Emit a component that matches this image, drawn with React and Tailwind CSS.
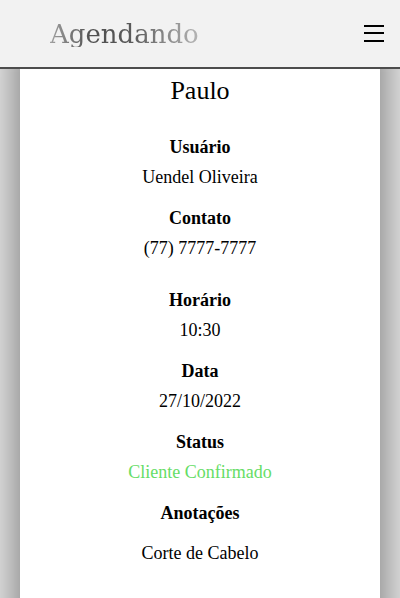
import React from 'react';

const fields = [
  { label: 'Usuário', value: 'Uendel Oliveira', gap: 'mt-[24px]' },
  { label: 'Contato', value: '(77) 7777-7777', gap: 'mt-[11px]' },
  { label: 'Horário', value: '10:30', gap: 'mt-[22px]' },
  { label: 'Data', value: '27/10/2022', gap: 'mt-[11px]' },
  { label: 'Status', value: 'Cliente Confirmado', gap: 'mt-[11px]', green: true },
  { label: 'Anotações', value: 'Corte de Cabelo', gap: 'mt-[11px]', valueGap: 'mt-[10px]' },
];

const App = () => {
  return (
    <div className="h-[598px] overflow-hidden bg-white font-['Liberation_Serif',serif]">
      {/* Header */}
      <header className="relative z-10 flex h-[69px] items-center justify-between border-b-2 border-[#4d4d4d] bg-[#f2f2f2] pr-4 pl-[50px]">
        <span className="bg-[linear-gradient(90deg,#a0a0a0_0%,#4f4f4f_28%,#5a5a5a_55%,#b5b5b5_100%)] bg-clip-text font-['DejaVu_Serif',serif] text-[26px] leading-none text-transparent">
          Agendando
        </span>
        <button className="-mt-[1px] flex w-5 flex-col gap-[5.5px]" aria-label="menu">
          <span className="block h-[2px] w-5 bg-black" />
          <span className="block h-[2px] w-5 bg-black" />
          <span className="block h-[2px] w-5 bg-black" />
        </button>
      </header>

      {/* Card */}
      <div className="mx-5 -mt-[60px] min-h-[700px] bg-white pt-[65px] text-center text-black shadow-[0_0_60px_rgba(0,0,0,0.68)]">
        <h2 className="text-[26px] leading-[34px]">Paulo</h2>
        {fields.map((f) => (
          <div key={f.label}>
            <p className={`${f.gap} text-[18px] leading-[30px] font-bold`}>{f.label}</p>
            <p
              className={`${f.valueGap || ''} text-[18px] leading-[30px] ${
                f.green ? 'text-[#66dd66]' : ''
              }`}
            >
              {f.value}
            </p>
          </div>
        ))}
      </div>
    </div>
  );
};

export default App;
